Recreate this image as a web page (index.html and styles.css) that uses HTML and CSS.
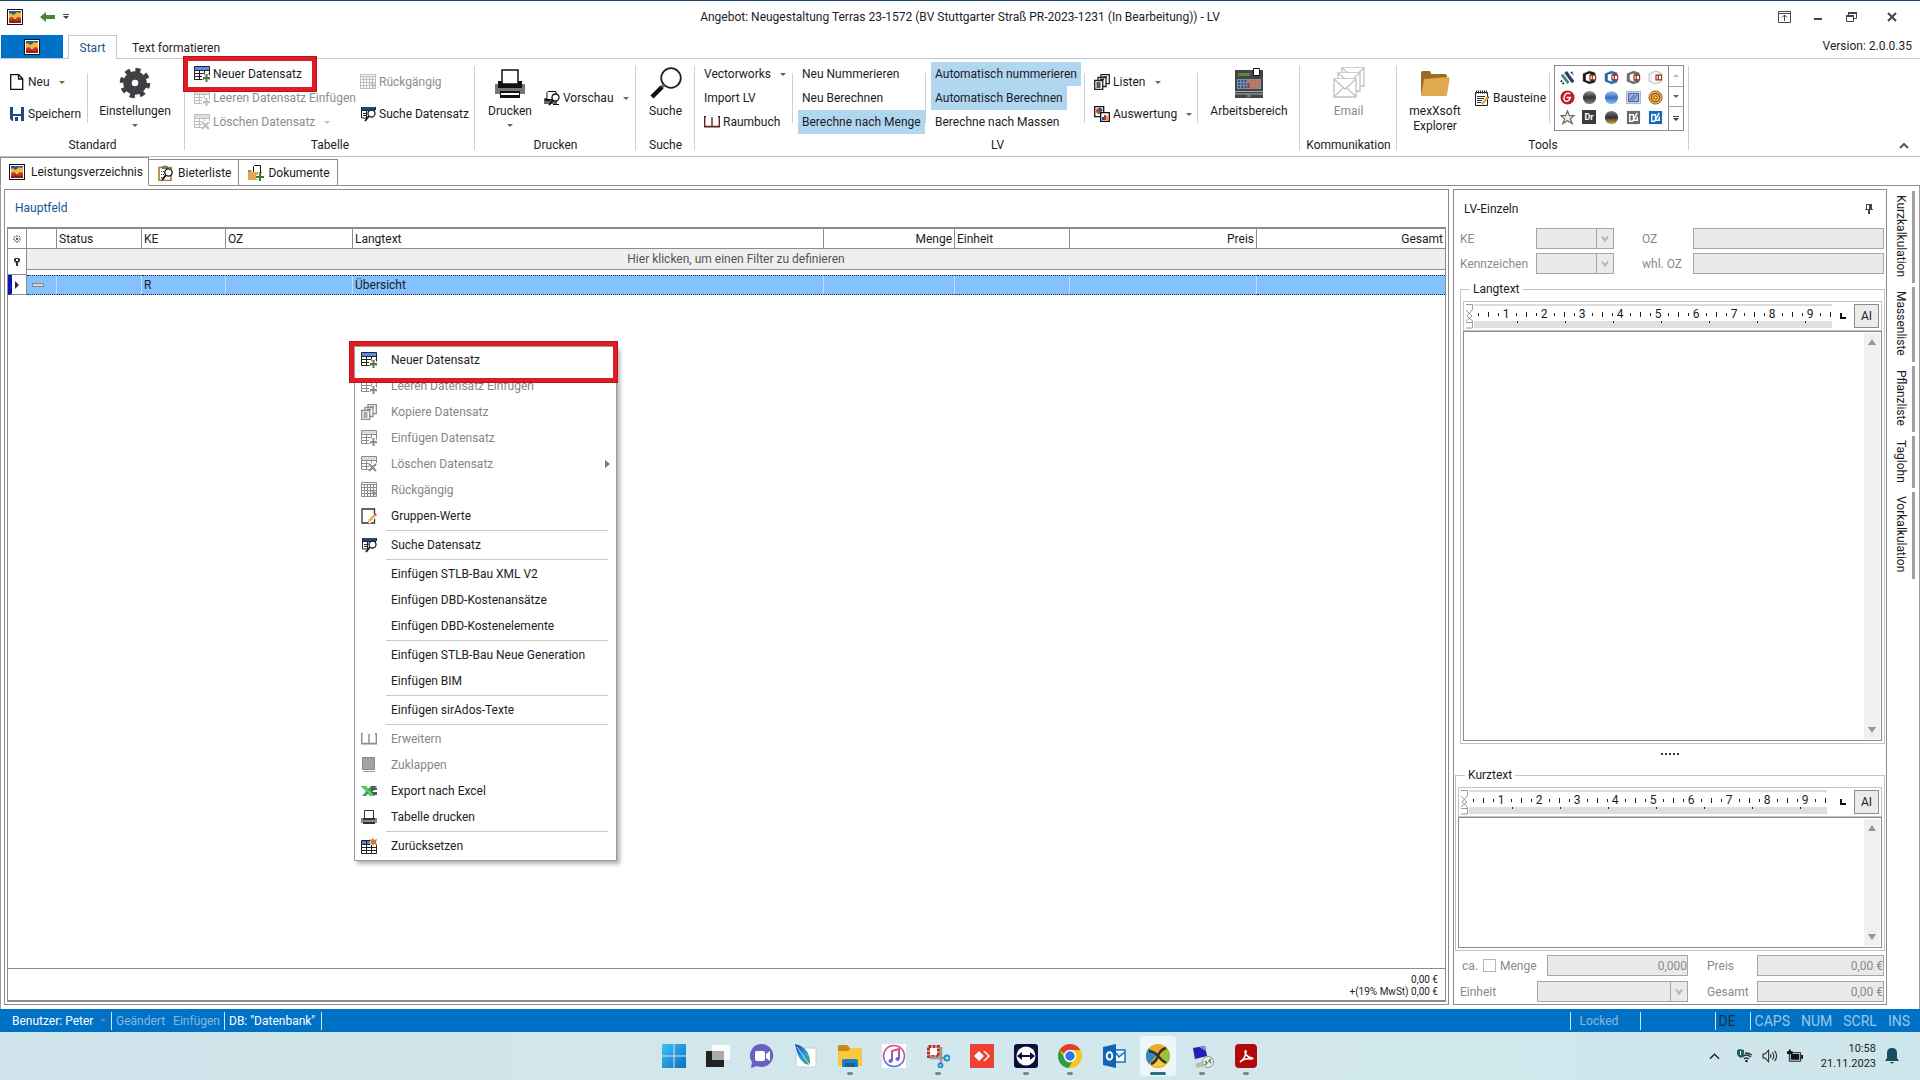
FILE: index.html
```html
<!DOCTYPE html>
<html lang="de">
<head>
	<meta charset="UTF-8">
	<meta name="viewport" content="width=device-width, initial-scale=1">

	<title>LV</title>

	<link rel="stylesheet" href="styles.css">
</head>
<body>

<!-- icon sprite -->
<svg class="sprite" aria-hidden="true">
	<defs>
		<linearGradient id="g-dark" x2="0" y2="1"><stop offset="0" stop-color="#999"/><stop offset=".5" stop-color="#333"/><stop offset="1" stop-color="#888"/></linearGradient>
		<linearGradient id="g-blue" x2="0" y2="1"><stop offset="0" stop-color="#a8c8ee"/><stop offset=".5" stop-color="#3a70be"/><stop offset="1" stop-color="#8bc0ff"/></linearGradient>
		<linearGradient id="g-gold" x2="0" y2="1"><stop offset="0" stop-color="#777"/><stop offset=".5" stop-color="#333"/><stop offset="1" stop-color="#d9a83c"/></linearGradient>
		<linearGradient id="g-win" x2="1" y2="1"><stop offset="0" stop-color="#3fc1f2"/><stop offset="1" stop-color="#0b6fc4"/></linearGradient>
		<linearGradient id="g-music" x2="0" y2="1"><stop offset="0" stop-color="#ec4a7c"/><stop offset="1" stop-color="#4a6fe0"/></linearGradient>
		<linearGradient id="g-feather" x2="1" y2="1"><stop offset="0" stop-color="#1c3fa0"/><stop offset=".6" stop-color="#26a5dc"/><stop offset="1" stop-color="#4a9a3c"/></linearGradient>
	</defs>
	<symbol id="app" viewBox="0 0 16 16">
		<path fill="#111" d="M0 0h16v16H0z"/><path fill="#fff" d="M1 1h14v14H1z"/>
		<path fill="#2d5590" d="M2 2h12v6H2z"/><path fill="#f3b93c" d="M2 5l2-1 2 2 2-1 2-2 2 1 2-1v6H2z"/>
		<path fill="#c63a22" d="M2 9l3-1 3 2 3-2 3 1v5H2z"/><path fill="#8e2317" d="M2 12l4-1 4 1 4-1v3H2z"/>
	</symbol>
	<symbol id="tbl" viewBox="0 0 16 16">
		<path class="head" d="M1 1h14v3H1z"/>
		<path fill="none" stroke="currentColor" d="M.5 .5h15v13H.5zM0 4.500h16M0 7.500h16M0 10.500h16M5.500 4v10M10.500 4v10"/>
	</symbol>
	<symbol id="tbl-new" viewBox="0 0 16 16">
		<use href="#tbl"/><path fill="#fff" d="M10.500 7h4v9h-4zM8 9.500h8v4H8z"/><path class="plus" d="M11.500 8h2v3h2.500v2h-2.500v3h-2v-3H9v-2h2.500z"/>
	</symbol>
	<symbol id="tbl-del" viewBox="0 0 16 16">
		<use href="#tbl"/><path fill="#fff" d="M8 7h8v9H8z"/><path fill="none" stroke="currentColor" stroke-width="2" d="M8 8l7 7M15 8l-7 7"/>
	</symbol>
	<symbol id="tbl-undo" viewBox="0 0 16 16">
		<path fill="none" stroke="currentColor" d="M.5 .5h15v14H.5zM0 2.500h16M0 5.500h16M0 8.500h16M0 11.500h16M3.500 3v11M6.500 3v11M9.500 3v11M12.500 3v11"/><path fill="currentColor" d="M10 9l5 1-1 4z"/>
	</symbol>
	<symbol id="tbl-find" viewBox="0 0 16 16">
		<path fill="#24477a" d="M1 1h14v3H1z"/><path fill="none" stroke="currentColor" d="M1.500 1v11H7M15.500 1v3M1 4.500h14M3 7.500h4M3 9.500h4M6.500 4v8"/>
		<circle cx="11.500" cy="7.500" r="3.500" fill="#fff" stroke="currentColor" stroke-width="1.300"/><path stroke="currentColor" stroke-width="2" d="M9 10l-4 5"/>
	</symbol>
	<symbol id="tbl-reset" viewBox="0 0 16 16">
		<path fill="#4f87d8" d="M1 3h9v3H1z"/><path fill="none" stroke="currentColor" d="M.5 2.500h15v13H.5zM0 6.500h16M0 9.500h16M0 12.500h16M5.500 3v12M10.500 3v12"/>
		<path fill="#fff" d="M9 1h7v6H9z"/><path fill="#d07a28" d="M12 0l1 2 3-1-1 3 1 3-3-1-1 2-1-2-2 1 1-3-2-3 2 1z"/>
	</symbol>
	<symbol id="copy" viewBox="0 0 16 16">
		<g fill="#fff" stroke="currentColor" stroke-width="1.300"><path d="M7 .7h8.300v9H7z"/><path d="M4 3.500h8v9H4z"/><path d="M.7 6.500h8v9h-8z"/><path d="M9 3h4M2.500 9h4M2.500 11h4M2.500 13h4M6 5.500h4"/></g>
	</symbol>
	<symbol id="page" viewBox="0 0 16 16"><path fill="#fff" stroke="#111" stroke-width="1.300" d="M1.700.7h8l4 4v10.600h-12zM9.500 1v4h4"/></symbol>
	<symbol id="save" viewBox="0 0 16 16"><path fill="#1d4a80" d="M1 1h14v14H3l-2-2z"/><path fill="#fff" d="M4 1h8v7H4zM4 10h8v5H4z"/><path fill="#1d4a80" d="M6 11h3v4H6z"/></symbol>
	<symbol id="edit" viewBox="0 0 16 16"><path fill="#fff" stroke="#333" stroke-width="1.300" d="M1 1h12.500v14H1z"/><path stroke="#fff" stroke-width="5" d="M7 14l7-7"/><path stroke="#eab155" stroke-width="2.600" d="M8 13l6-6"/><path stroke="#b04a3c" stroke-width="2.600" d="M14 7l1-1"/><path stroke="#555" d="M6 15l1.500-1.500"/></symbol>
	<symbol id="book" viewBox="0 0 16 12"><path fill="none" stroke="currentColor" stroke-width="1.400" d="M2 .7H.7v10h14.600v-10H14M8 1v9M.7 10.500h14.600"/></symbol>
	<symbol id="closed" viewBox="0 0 16 16"><path fill="#a3a3a3" stroke="#888" d="M1.500.5h12v12h-12z"/><path stroke="#999" d="M2 14.500h12"/></symbol>
	<symbol id="excel" viewBox="0 0 16 12"><path fill="#555" d="M10 1h6l-2 2h3v2h-4l-2 2h5v3h-6z"/><path fill="#2fae47" d="M0 1h5l9 10H9z"/><path fill="#2b6e3c" d="M14 1h-4L1 11h4z" opacity=".75"/><path fill="#53dc65" d="M1.500 1.500h3l8 9h-3z"/></symbol>
	<symbol id="printer" viewBox="0 0 32 32"><path fill="#77777b" d="M1 17h30v10H1z"/><path fill="#111" d="M4 14h24v7H4z"/><path fill="#fff" stroke="#111" stroke-width="1.500" d="M8 3h16v14H8z"/><path fill="#111" d="M4 17h24v4H4zM6 24h20v7H6z"/><path fill="#fff" d="M7 26h18v2H7z"/></symbol>
	<symbol id="print-small" viewBox="0 0 16 16"><path fill="#8a8a8e" d="M0 9h16v5H0z"/><path fill="#fff" stroke="#333" d="M3.500 1.500h9v8h-9z"/><path fill="#333" d="M2 9h12v2H2zM2 13h12v2H2z"/></symbol>
	<symbol id="preview" viewBox="0 0 16 16"><path fill="#666" d="M0 8h13v6H0z"/><path fill="#fff" stroke="#111" d="M4 1.500l-1 1v7h9v-8z"/><path fill="#111" d="M1 9h5v2H1z"/><circle cx="11.500" cy="7.500" r="3.500" fill="#fff" stroke="#111" stroke-width="1.300"/><path stroke="#111" stroke-width="2" d="M9 10l-4 5"/><path stroke="#111" d="M9 14.500h6"/></symbol>
	<symbol id="lens" viewBox="0 0 32 32"><circle cx="21" cy="11" r="9.800" fill="none" stroke="#222" stroke-width="1.800"/><path stroke="#666" stroke-width="3" d="M14 18l-3 3"/><path stroke="#111" stroke-width="4.500" d="M12 20L2 30"/></symbol>
	<symbol id="gear" viewBox="0 0 32 32"><circle cx="16" cy="16" r="7.500" fill="none" stroke="#3f3f44" stroke-width="8.500"/><circle cx="16" cy="16" r="13" fill="none" stroke="#3f3f44" stroke-width="4.500" stroke-dasharray="5.105"/></symbol>
	<symbol id="chart" viewBox="0 0 16 16"><path fill="#fff" stroke="#111" stroke-width="1.300" d="M.7.7h9v10h-9z"/><circle cx="5" cy="5" r="3" fill="#b5502d"/><path fill="#2a4ca0" d="M5 5V1.500A3.500 3.500 0 0 1 8.500 5z"/><path fill="#fff" stroke="#111" stroke-width="1.300" d="M6.700 6.700h8.600v8.600H6.700z"/><path fill="#2a4ca0" d="M8 11h2v3H8z"/><path fill="#b5302d" d="M10 9h2v5h-2z"/><path fill="#e0a030" d="M12 10h2v4h-2z"/></symbol>
	<symbol id="calc" viewBox="0 0 32 32"><path fill="#434549" d="M2 3h28v21H2zM2 25h28v6H2z"/><path fill="#8c8e91" d="M4 12h24v10H4z"/><path fill="#5b8a3c" d="M5 6h12v3H5z"/><path fill="#fff" stroke="#111" d="M20.500 1.500h6v7h-6z"/><path stroke="#2456a8" stroke-width="2" stroke-dasharray="2 1.300" d="M5 14h9M5 17h9M5 20h9"/><path stroke="#e0622a" stroke-width="2" stroke-dasharray="2 1.300" d="M18 14h9M18 17h9M18 20h9"/><path stroke="#c22" stroke-width="2" d="M15.500 16v5"/><path stroke="#aaa" d="M2 24.500h28M2 27h28M14 29h4"/></symbol>
	<symbol id="mail" viewBox="0 0 32 32"><g fill="#fff" stroke="#c2c2c4" stroke-width="1.300"><path d="M9 1h22v18H9z"/><path d="M9 1l11 9 11-9"/><path d="M5 6h22v18H5z"/><path d="M5 6l11 9 11-9"/><path d="M1 12h22v18H1z"/><path d="M1 30l9-9M23 30l-9-9"/><path d="M1 12l11 10 11-10"/></g></symbol>
	<symbol id="folder" viewBox="0 0 32 32"><path fill="#9c6c24" d="M2 28V6q0-2 2-2h6q2 0 2 3h14q2 0 2 2v4H8z"/><path fill="#e0a950" d="M5 12l24-2q2 0 1.500 2L28 28q0 1-2 1H2z"/></symbol>
	<symbol id="notes" viewBox="0 0 16 16"><path fill="#fff" stroke="#222" d="M1.500 2.500h12v13h-12z"/><path stroke="#222" stroke-width="3" stroke-dasharray="1 1" d="M2 2h12"/><path stroke="#333" d="M3 6.500h8M3 8.500h7M3 10.500h5M3 12.500h4"/><path stroke="#e3a63c" stroke-width="2.500" d="M8 14l6-7"/><path stroke="#b33" stroke-width="2.500" d="M13.500 7.500l1-1"/></symbol>
	<symbol id="clip" viewBox="0 0 16 16"><path fill="#fff" stroke="#a87a35" stroke-width="1.600" d="M1 2.500h12v13H1z"/><path fill="#777" d="M4 1h2l1-1 1 1h2v3H4z"/><path stroke="#333" stroke-dasharray="1 1" d="M3 6.500h4M3 9.500h3M3 12.500h3"/><circle cx="10.500" cy="7.500" r="3.700" fill="#fff" stroke="#111" stroke-width="1.300"/><path stroke="#111" stroke-width="2" d="M8 10l-4 5"/></symbol>
	<symbol id="docs" viewBox="0 0 16 16"><path fill="#b98233" d="M0 5h3l1 2h10v7H0z"/><path fill="#fff" stroke="#111" d="M6.500.5h6v8h-7v-7z"/><path fill="#e0a950" d="M0 7h12l-1 8H0z"/><path fill="#fff" d="M10 8h4v8h-4zM8 10h8v4H8z"/><path fill="#3c7a35" d="M11 8h2v3h3v2h-3v3h-2v-3H8v-2h3z"/></symbol>
	<symbol id="cube" viewBox="0 0 16 16"><path fill="currentColor" stroke="#888" stroke-width=".5" d="M1 4l7-3 6 2v10l-6 2-7-3z"/><path fill="#fff" d="M4 5l5-1.500v9L4 11z"/><path fill="#fff" stroke="#9a3420" stroke-width="1.300" d="M8.500 5.500h6v5h-6zM11 5.500v5"/></symbol>
	<symbol id="stripes" viewBox="0 0 16 16"><path stroke="#2b3c6e" stroke-width="3.500" d="M6 2l8 11"/><path stroke="#3a9070" stroke-width="3" d="M2 5l7 9"/><path stroke="#2b3c6e" stroke-width="2" d="M12 2l2 3M1 11l3 4" stroke-dasharray="2 1"/></symbol>
	<symbol id="seal" viewBox="0 0 16 16"><circle cx="8" cy="8" r="7.500" fill="#c41a22"/><path fill="none" stroke="#fff" stroke-width="1.500" d="M11 4q-4-2-6 2t1 6q3 1 5-4H7"/></symbol>
	<symbol id="stamp" viewBox="0 0 16 16"><path fill="#e8eef8" stroke="#aab" d="M.5 1.500h15v13H.5z"/><path fill="#8fb0e4" stroke="#2c4f96" d="M2.500 3.500h11v9h-11z"/><path stroke="#35589c" d="M4 11l5-6M7 11l5-6"/></symbol>
	<symbol id="coil" viewBox="0 0 16 16"><circle cx="8" cy="8" r="7" fill="#eeb95c" stroke="#8f5512"/><circle cx="8" cy="8" r="4.500" fill="none" stroke="#8f5512" stroke-width="1.300"/><circle cx="8" cy="8" r="2" fill="none" stroke="#8f5512"/></symbol>
	<symbol id="star" viewBox="0 0 16 16"><path fill="#f4ecd0" stroke="#666" stroke-width="1.300" d="M8 1l2 5h5l-4 3.500 2 5L8 11.500l-5 3 2-5L1 6h5z"/></symbol>
	<symbol id="vee" viewBox="0 0 16 16"><path fill="currentColor" d="M1 1h14v14H1z"/><path fill="none" stroke="#fff" stroke-width="1.500" d="M4 4v8h3l5-9M5 5h3v6h4V7"/></symbol>
	<symbol id="pin" viewBox="0 0 10 10"><path fill="#444" d="M2 0h6v5h1v1H6v4H4V6H1V5h1z"/><path fill="#fff" d="M3 1h2v4H3z"/></symbol>
</svg>

<div class="app">
	<header class="titlebar">
		<div class="quick">
			<svg class="i16"><use href="#app"/></svg>
			<button type="button" aria-label="Zurück"><svg class="back" viewBox="0 0 15 10"><path fill="#4f8136" d="M0 5l6-5v3h9v4H6v3z"/></svg></button>
			<button type="button" aria-label="Anpassen"><svg class="more" viewBox="0 0 6 6"><path fill="#444" d="M0 0h6v1H0zM0 2h6L3 5z"/></svg></button>
		</div>
		<div class="caption">Angebot: Neugestaltung Terras 23-1572 (BV Stuttgarter Straß PR-2023-1231 (In Bearbeitung)) - LV</div>
		<div class="winctl">
			<button type="button" aria-label="Menüband"><svg viewBox="0 0 14 14"><path fill="none" stroke="#444" d="M.5 1.500h12v11H.5zM1 3.500h12M6.500 11V5M4 7.500L6.500 5 9 7.500"/></svg></button>
			<button type="button" aria-label="Minimieren"><svg viewBox="0 0 14 14"><path fill="#444" d="M3 8h8v2H3z"/></svg></button>
			<button type="button" aria-label="Wiederherstellen"><svg viewBox="0 0 14 14"><path fill="none" stroke="#444" d="M4.500 5V2.500h8v6H10M2.500 5.500h7v6h-7z"/><path stroke="#444" stroke-width="2" d="M4 3h9M2 6h8"/></svg></button>
			<button type="button" aria-label="Schließen"><svg viewBox="0 0 14 14"><path stroke="#444" stroke-width="2" d="M3 3l8 8M11 3l-8 8"/></svg></button>
		</div>
	</header>

	<nav class="tabs">
		<button type="button" class="file" aria-label="Datei"><svg class="i16"><use href="#app"/></svg></button>
		<button type="button" class="tab active">Start</button>
		<button type="button" class="tab">Text formatieren</button>
		<span class="version">Version: 2.0.0.35</span>
	</nav>

	<div class="ribbon">
		<section class="group">
			<div class="cmds cmds-standard">
				<div class="col sep">
					<button type="button"><svg class="i16"><use href="#page"/></svg>Neu<i class="arr"></i></button>
					<button type="button"><svg class="i16"><use href="#save"/></svg>Speichern</button>
				</div>
				<button type="button" class="big"><svg><use href="#gear"/></svg>Einstellungen<i class="arr"></i></button>
			</div>
			<h2>Standard</h2>
		</section>
		<section class="group">
			<div class="cmds cmds-table">
				<div class="col">
					<button type="button" class="marked"><svg class="i16 color"><use href="#tbl-new"/></svg>Neuer Datensatz</button>
					<button type="button" disabled><svg class="i16"><use href="#tbl-new"/></svg>Leeren Datensatz Einfügen</button>
					<button type="button" disabled><svg class="i16"><use href="#tbl-del"/></svg>Löschen Datensatz<i class="arr"></i></button>
				</div>
				<div class="col">
					<button type="button" disabled><svg class="i16"><use href="#tbl-undo"/></svg>Rückgängig</button>
					<button type="button"><svg class="i16"><use href="#tbl-find"/></svg>Suche Datensatz</button>
				</div>
			</div>
			<h2>Tabelle</h2>
		</section>
		<section class="group">
			<div class="cmds cmds-print">
				<button type="button" class="big"><svg><use href="#printer"/></svg>Drucken<i class="arr"></i></button>
				<div class="col">
					<button type="button"><svg class="i16"><use href="#preview"/></svg>Vorschau<i class="arr"></i></button>
				</div>
			</div>
			<h2>Drucken</h2>
		</section>
		<section class="group">
			<div class="cmds cmds-search">
				<button type="button" class="big"><svg><use href="#lens"/></svg>Suche</button>
			</div>
			<h2>Suche</h2>
		</section>
		<section class="group">
			<div class="cmds cmds-lv">
				<div class="col sep">
					<button type="button">Vectorworks<i class="arr"></i></button>
					<button type="button">Import LV</button>
					<button type="button"><svg class="i16 red"><use href="#book"/></svg>Raumbuch</button>
				</div>
				<div class="col sep">
					<button type="button">Neu Nummerieren</button>
					<button type="button">Neu Berechnen</button>
					<button type="button" class="on">Berechne nach Menge</button>
				</div>
				<div class="col sep">
					<button type="button" class="on">Automatisch nummerieren</button>
					<button type="button" class="on">Automatisch Berechnen</button>
					<button type="button">Berechne nach Massen</button>
				</div>
				<div class="col sep">
					<button type="button"><svg class="i16"><use href="#copy"/></svg>Listen<i class="arr"></i></button>
					<button type="button"><svg class="i16"><use href="#chart"/></svg>Auswertung<i class="arr"></i></button>
				</div>
				<button type="button" class="big"><svg><use href="#calc"/></svg>Arbeitsbereich</button>
			</div>
			<h2>LV</h2>
		</section>
		<section class="group">
			<div class="cmds cmds-mail">
				<button type="button" class="big" disabled><svg><use href="#mail"/></svg>Email</button>
			</div>
			<h2>Kommunikation</h2>
		</section>
		<section class="group">
			<div class="cmds cmds-tools">
				<button type="button" class="big"><svg><use href="#folder"/></svg>mexXsoft Explorer</button>
				<div class="col sep">
					<button type="button"><svg class="i16"><use href="#notes"/></svg>Bausteine</button>
				</div>
				<div class="gallery">
					<div class="cells">
						<svg><use href="#stripes"/></svg>
						<svg class="c-black"><use href="#cube"/></svg>
						<svg class="c-blue"><use href="#cube"/></svg>
						<svg class="c-gray"><use href="#cube"/></svg>
						<svg class="c-white"><use href="#cube"/></svg>
						<svg><use href="#seal"/></svg>
						<svg viewBox="0 0 16 16"><circle cx="8" cy="8" r="7" fill="url(#g-dark)"/></svg>
						<svg viewBox="0 0 16 16"><circle cx="8" cy="8" r="7" fill="url(#g-blue)"/></svg>
						<svg><use href="#stamp"/></svg>
						<svg><use href="#coil"/></svg>
						<svg><use href="#star"/></svg>
						<span class="dr">Dr</span>
						<svg viewBox="0 0 16 16"><circle cx="8" cy="8" r="7" fill="url(#g-gold)"/></svg>
						<svg class="c-gray"><use href="#vee"/></svg>
						<svg class="c-blue"><use href="#vee"/></svg>
					</div>
					<div class="scroller">
						<button type="button" aria-label="Hoch"><i class="arr up"></i></button>
						<button type="button" aria-label="Runter"><i class="arr"></i></button>
						<button type="button" aria-label="Alle"><svg class="more" viewBox="0 0 6 6"><path fill="#444" d="M0 0h6v1H0zM0 2h6L3 5z"/></svg></button>
					</div>
				</div>
			</div>
			<h2>Tools</h2>
		</section>
		<button type="button" class="collapse" aria-label="Menüband reduzieren"><svg viewBox="0 0 10 6"><path fill="none" stroke="#555" stroke-width="2" d="M1 5l4-4 4 4"/></svg></button>
	</div>

	<nav class="doctabs">
		<button type="button" class="active"><svg class="i16"><use href="#app"/></svg>Leistungsverzeichnis</button>
		<button type="button"><svg class="i16"><use href="#clip"/></svg>Bieterliste</button>
		<button type="button"><svg class="i16"><use href="#docs"/></svg>Dokumente</button>
		<span class="rest"></span>
	</nav>

	<main class="work">
		<section class="main">
			<h1>Hauptfeld</h1>
			<div class="grid">
				<table>
					<colgroup><col class="w-ind"><col class="w-exp"><col class="w-status"><col class="w-ke"><col class="w-oz"><col><col class="w-menge"><col class="w-einheit"><col class="w-preis"><col class="w-gesamt"></colgroup>
					<thead>
						<tr><th class="ind"><svg class="spark" viewBox="0 0 8 8"><path stroke="#444" d="M4 0v8M0 4h8M1 1l6 6M7 1L1 7" stroke-dasharray="2 1"/></svg></th><th></th><th>Status</th><th>KE</th><th>OZ</th><th>Langtext</th><th class="num">Menge</th><th>Einheit</th><th class="num">Preis</th><th class="num">Gesamt</th></tr>
					</thead>
					<tbody>
						<tr class="filter"><td class="ind"><svg viewBox="0 0 6 8"><path fill="#333" d="M0 1l1-1h4l1 1v2L4 5v3H2V5L0 3z"/><path fill="#fff" d="M2 1h2v2H2z"/></svg></td><td colspan="9"><div>Hier klicken, um einen Filter zu definieren</div></td></tr>
						<tr class="row"><td class="ind cur"><i></i></td><td><span class="dash"></span></td><td></td><td>R</td><td></td><td>Übersicht</td><td></td><td></td><td></td><td></td></tr>
					</tbody>
				</table>
				<footer><span>0,00 €</span><span>+(19% MwSt) 0,00 €</span></footer>
			</div>

			<div class="menu">
				<button type="button" class="marked"><svg class="i16 color"><use href="#tbl-new"/></svg>Neuer Datensatz</button>
				<button type="button" disabled><svg class="i16"><use href="#tbl-new"/></svg>Leeren Datensatz Einfügen</button>
				<button type="button" disabled><svg class="i16"><use href="#copy"/></svg>Kopiere Datensatz</button>
				<button type="button" disabled><svg class="i16"><use href="#tbl-new"/></svg>Einfügen Datensatz</button>
				<button type="button" disabled><svg class="i16"><use href="#tbl-del"/></svg>Löschen Datensatz<i class="sub"></i></button>
				<button type="button" disabled><svg class="i16"><use href="#tbl-undo"/></svg>Rückgängig</button>
				<button type="button"><svg class="i16"><use href="#edit"/></svg>Gruppen-Werte</button>
				<hr>
				<button type="button"><svg class="i16"><use href="#tbl-find"/></svg>Suche Datensatz</button>
				<hr>
				<button type="button"><svg class="i16"></svg>Einfügen STLB-Bau XML V2</button>
				<button type="button"><svg class="i16"></svg>Einfügen DBD-Kostenansätze</button>
				<button type="button"><svg class="i16"></svg>Einfügen DBD-Kostenelemente</button>
				<hr>
				<button type="button"><svg class="i16"></svg>Einfügen STLB-Bau Neue Generation</button>
				<button type="button"><svg class="i16"></svg>Einfügen BIM</button>
				<hr>
				<button type="button"><svg class="i16"></svg>Einfügen sirAdos-Texte</button>
				<hr>
				<button type="button" disabled><svg class="i16"><use href="#book"/></svg>Erweitern</button>
				<button type="button" disabled><svg class="i16"><use href="#closed"/></svg>Zuklappen</button>
				<button type="button"><svg class="i16"><use href="#excel"/></svg>Export nach Excel</button>
				<button type="button"><svg class="i16"><use href="#print-small"/></svg>Tabelle drucken</button>
				<hr>
				<button type="button"><svg class="i16"><use href="#tbl-reset"/></svg>Zurücksetzen</button>
			</div>
		</section>

		<aside class="detail">
			<header><h2>LV-Einzeln</h2><svg><use href="#pin"/></svg></header>
			<div class="fields top">
				<label for="ke">KE</label>
				<span class="combo"><select id="ke" disabled></select><svg viewBox="0 0 8 6"><path d="M1 1l3 4 3-4"/></svg></span>
				<label for="oz">OZ</label>
				<input id="oz" type="text" disabled>
				<label for="kz">Kennzeichen</label>
				<span class="combo"><select id="kz" disabled></select><svg viewBox="0 0 8 6"><path d="M1 1l3 4 3-4"/></svg></span>
				<label for="whl">whl. OZ</label>
				<input id="whl" type="text" disabled>
			</div>

			<fieldset class="long">
				<legend>Langtext</legend>
				<div class="ruler">
					<svg class="indent" viewBox="0 0 8 25"><path fill="#fff" stroke="#999" d="M0 .5h6.500v5L1 12l5.500 5v7H0M0 6l6 6-6 5M0 18.500h6"/></svg>
					<div class="scale"><div class="nums"><span>1</span><span>2</span><span>3</span><span>4</span><span>5</span><span>6</span><span>7</span><span>8</span><span>9</span></div></div>
					<i class="tabstop"></i>
					<button type="button">AI</button>
				</div>
				<div class="edit">
					<textarea aria-label="Langtext"></textarea>
					<div class="vbar"><i class="u"></i><i class="d"></i></div>
				</div>
			</fieldset>

			<div class="splitter"><i></i><i></i><i></i><i></i><i></i></div>

			<fieldset class="short">
				<legend>Kurztext</legend>
				<div class="ruler">
					<svg class="indent" viewBox="0 0 8 25"><path fill="#fff" stroke="#999" d="M0 .5h6.500v5L1 12l5.500 5v7H0M0 6l6 6-6 5M0 18.500h6"/></svg>
					<div class="scale"><div class="nums"><span>1</span><span>2</span><span>3</span><span>4</span><span>5</span><span>6</span><span>7</span><span>8</span><span>9</span></div></div>
					<i class="tabstop"></i>
					<button type="button">AI</button>
				</div>
				<div class="edit">
					<textarea aria-label="Kurztext"></textarea>
					<div class="vbar"><i class="u"></i><i class="d"></i></div>
				</div>
			</fieldset>

			<div class="fields sums">
				<div class="qty">
					<label for="ca">ca.</label><input id="ca" type="checkbox" disabled>
					<label for="menge">Menge</label>
					<input id="menge" type="text" value="0,000" disabled>
				</div>
				<label for="preis">Preis</label>
				<input id="preis" type="text" value="0,00 €" disabled>
				<div class="unit">
					<label for="einheit">Einheit</label>
					<span class="combo"><select id="einheit" disabled></select><svg viewBox="0 0 8 6"><path d="M1 1l3 4 3-4"/></svg></span>
				</div>
				<label for="gesamt">Gesamt</label>
				<input id="gesamt" type="text" value="0,00 €" disabled>
			</div>
		</aside>

		<nav class="side">
			<button type="button">Kurzkalkulation</button>
			<button type="button">Massenliste</button>
			<button type="button">Pflanzliste</button>
			<button type="button">Taglohn</button>
			<button type="button">Vorkalkulation</button>
		</nav>
	</main>

	<footer class="status">
		<span class="user">Benutzer: Peter<i class="arr"></i></span>
		<span class="dim">Geändert</span>
		<span class="dim cut">Einfügen</span>
		<span class="db">DB: "Datenbank"</span>
		<span class="fill"></span>
		<span class="dim locked">Locked</span>
		<span class="blank"></span>
		<span class="lang">DE</span>
		<span class="keys"><span>CAPS</span><span>NUM</span><span>SCRL</span><span>INS</span></span>
	</footer>
</div>

<footer class="taskbar">
	<div class="dock">
		<a href="#"><svg viewBox="0 0 24 24"><path fill="url(#g-win)" d="M0 0h11.500v11.500H0zM12.500 0H24v11.500H12.500zM0 12.500h11.500V24H0zM12.500 12.500H24V24H12.500z"/></svg></a>
		<a href="#"><svg viewBox="0 0 24 24"><path fill="#222" d="M0 7h18v16H0z"/><path fill="#fff" d="M6 1h18v15H6z" opacity=".9"/><path fill="#aaa" d="M6 7h12v9H6z"/></svg></a>
		<a href="#"><svg viewBox="0 0 24 24"><path fill="#6c5fc0" d="M12 0a11.500 11.500 0 1 1-5 22L1 24l1-6A11.500 11.500 0 0 1 12 0z"/><rect x="5" y="7" width="10" height="10" rx="2" fill="#fff"/><path fill="#fff" d="M16 10l4-3v10l-4-3z"/></svg></a>
		<a href="#"><svg viewBox="0 0 24 24"><path fill="#fff" stroke="#ccc" d="M5 4h17v19H2V12z"/><path fill="url(#g-feather)" d="M1 0q11 2 14 12 2 6 0 9-6-1-10-8Q2 6 1 0z"/><path stroke="#fff" stroke-width=".7" fill="none" d="M3 3l14 20"/></svg></a>
		<a href="#" class="run"><svg viewBox="0 0 24 24"><path fill="#c88c14" d="M0 2q0-1 1-1h8l3 3v4H0z"/><path fill="#fbc93d" d="M0 7h10l3-3h10q1 0 1 1v17H0z"/><path fill="#1f7fc4" d="M4 17q0-2 2-2h12q2 0 2 2v6H4z"/><path fill="#166096" d="M7 19h10v4H7z"/></svg></a>
		<a href="#"><svg viewBox="0 0 24 24"><path fill="#fff" d="M0 0h24v24H0z"/><circle cx="12" cy="12" r="10.500" fill="none" stroke="url(#g-music)" stroke-width="1.500"/><path fill="none" stroke="url(#g-music)" stroke-width="2" d="M10 17V7l7-2v10"/><circle cx="8.500" cy="17" r="2" fill="#7a5fd0"/><circle cx="15.500" cy="15" r="2" fill="#7a5fd0"/></svg></a>
		<a href="#" class="run"><svg viewBox="0 0 24 24"><path fill="#fff" stroke="#b5301c" stroke-width="3" stroke-dasharray="3 1" d="M2.500 2.500h10v10h-10z"/><path fill="none" stroke="#999" stroke-width="2.500" d="M15 3v16M4 14h15"/><circle cx="21" cy="14" r="2.500" fill="none" stroke="#1d8bc8" stroke-width="1.800"/><circle cx="14.500" cy="21.500" r="2" fill="none" stroke="#1d8bc8" stroke-width="1.800"/></svg></a>
		<a href="#"><svg viewBox="0 0 24 24"><path fill="#ee4135" d="M0 0h24v24H0z"/><path fill="#fff" d="M9 7l5 5-5 5-5-5zM13 7h2l5 5-5 5h-2l5-5z"/></svg></a>
		<a href="#" class="run"><svg viewBox="0 0 24 24"><rect width="24" height="24" rx="3" fill="#0a1038"/><circle cx="12" cy="12" r="9.500" fill="#fff"/><path fill="#0a1038" d="M3 12l5-4v3h8V8l5 4-5 4v-3H8v3z"/></svg></a>
		<a href="#" class="run"><svg viewBox="0 0 24 24"><circle cx="12" cy="12" r="12" fill="#f9c51d"/><path fill="#de4032" d="M1.600 6A12 12 0 0 1 22.400 6H12a6 6 0 0 0-5.500 4z"/><path fill="#2a9d48" d="M1.600 6l5.200 9a6 6 0 0 0 7.200 3l-3.500 6A12 12 0 0 1 1.600 6z"/><circle cx="12" cy="12" r="5.500" fill="#2f76e8" stroke="#fff" stroke-width="1.500"/></svg></a>
		<a href="#"><svg viewBox="0 0 24 24"><path fill="#fff" stroke="#1272c2" stroke-width="1.500" d="M12 6h11v12H12zM13 8l4 5 6-5"/><path fill="#0f65b4" d="M1 3l13-3v24L1 21z"/><ellipse cx="7.500" cy="12" rx="2.800" ry="3.700" fill="none" stroke="#fff" stroke-width="2"/></svg></a>
		<a href="#" class="run now"><svg viewBox="0 0 24 24"><circle cx="12" cy="12" r="12" fill="#efa92a"/><path fill="#2d8dc0" d="M3 4l7 8-7 8a12 12 0 0 1 0-16z"/><path fill="#9cc23a" d="M21 4l-7 8 7 8a12 12 0 0 0 0-16z"/><path fill="#f3cf3a" d="M4 20l8-7 8 7a12 12 0 0 1-16 0z"/><path fill="none" stroke="#333" stroke-width="2.500" d="M3 7q6 1 9 5t8 7M20 4q-6 2-8 8t-7 8"/></svg></a>
		<a href="#" class="run"><svg viewBox="0 0 24 24"><path fill="#ddd" d="M1 3l15-3 3 13L4 18z"/><path fill="#1a22b8" d="M3 4l12-2 2 10-12 3z"/><path fill="#7a8fe8" d="M9 3l6-1 1 5z"/><path fill="#bbb" d="M5 20l8-3 2 5-8 2z"/><circle cx="18" cy="18" r="5.500" fill="#e8eee4" stroke="#999"/><path fill="none" stroke="#3c7a35" stroke-width="1.300" d="M15 17l2 2-2 2M21 15l-2 2 2 2"/></svg></a>
		<a href="#" class="run"><svg viewBox="0 0 24 24"><rect x="1" width="22" height="24" rx="4" fill="#b20a0a"/><path fill="none" stroke="#fff" stroke-width="1.600" d="M6 18q5-3 6-10 0-3-1 0 1 5 7 6 2 1-1 1-6-1-10 2z"/></svg></a>
	</div>
	<div class="tray">
		<svg viewBox="0 0 12 7"><path fill="none" stroke="#222" stroke-width="1.500" d="M1 6l5-5 5 5"/></svg>
		<svg viewBox="0 0 16 14"><path fill="none" stroke="#333" stroke-width="1.300" d="M5 8q4-4 9 0M7 10q2-2 5 0M8 4q4 0 7 2"/><circle cx="9.500" cy="12" r="1.300" fill="#222"/><path fill="#176068" d="M0 1l3-1 4 1v4q-1 3-3.500 4Q0 7 0 5z"/><path stroke="#fff" d="M3.500 2v4"/></svg>
		<svg viewBox="0 0 17 14"><path fill="none" stroke="#333" stroke-width="1.200" d="M1 5h2l4-4v12l-4-4H1zM9 5q1 2 0 4M11 3q3 4 0 8M13.500 1.500q4 5.500 0 11"/></svg>
		<svg viewBox="0 0 17 14"><path fill="none" stroke="#111" d="M2.500 3.500h12v9h-12z"/><path fill="#111" d="M4 5h9v6H4zM15 6h2v4h-2zM2 0h2v2h2v3H0V2h2z"/></svg>
		<div class="clock"><time>10:58</time><time>21.11.2023</time></div>
		<svg viewBox="0 0 14 16"><path fill="#17505c" d="M7 0q5 0 5 5v5l2 3H0l2-3V5q0-5 5-5zM5 14h4q-2 3-4 0z"/></svg>
	</div>
</footer>

</body>
</html>
```
FILE: styles.css
```css
* {
	box-sizing: border-box;
	margin: 0;
	padding: 0;
}

body {
	display: flex;
	flex-direction: column;
	height: 100vh;
	overflow: hidden;
	background: #fff;
	color: #1c1c28;
	font: 12px/16px Roboto, "Noto Sans", sans-serif;
}

button, input, select, textarea {
	font: inherit;
	color: inherit;
	background: none;
	border: 0;
	border-radius: 0;
}

button {
	white-space: nowrap;
}

h1, h2 {
	font-size: 12px;
	font-weight: normal;
}

svg {
	display: block;
	flex: none;
}

.sprite {
	position: absolute;
	width: 0;
	height: 0;
}

.i16 {
	width: 16px;
	height: 16px;
	color: #222;
}

.head { fill: var(--head, #ddd); }
.plus { fill: var(--plus, currentColor); }

.color {
	--head: #5b8cf0;
	--plus: #4c7a3c;
}

button:disabled .i16 { color: #8c8c8c; }
.ribbon button:disabled .i16 { color: #bdbdbd; }
.red { color: #5e2222; }

.arr {
	flex: none;
	width: 0;
	height: 0;
	border: 3px solid transparent;
	border-top-color: #666;
	border-bottom: 0;
}

.app {
	flex: 1;
	display: flex;
	flex-direction: column;
	min-height: 0;
	border-top: 1px solid #1f4568;
}

/* title bar */
.titlebar {
	display: grid;
	grid-template-columns: 1fr auto 1fr;
	align-items: center;
	height: 34px;
	padding: 0 7px 2px;
}

.quick {
	display: flex;
	align-items: center;
}

.back { width: 15px; height: 10px; margin-left: 17px; }
.quick .more { margin-left: 8px; }
.more { width: 6px; height: 6px; }

.winctl {
	display: flex;
	justify-content: flex-end;
	gap: 19px;
	padding-right: 14px;
}

.winctl button:last-child { margin-left: 8px; }
.winctl svg { width: 14px; height: 14px; }

.tabs {
	display: flex;
	height: 24px;
	padding-left: 1px;
	border-bottom: 1px solid #c6c6c6;
}

.file {
	display: flex;
	align-items: center;
	justify-content: center;
	width: 62px;
	background: #0072c6;
}

.tab {
	padding: 2px 15px 0;
}

.tab.active {
	width: 49px;
	margin: 0 0 -1px 5px;
	padding: 0;
	color: #19548c;
	background: #fff;
	border: 1px solid #c6c6c6;
	border-bottom: 0;
}

.version {
	margin-left: auto;
	padding: 3px 8px 0 0;
}

/* ribbon */
.ribbon {
	display: flex;
	height: 98px;
	border-bottom: 1px solid #c0c0c0;
}

.group {
	padding-top: 3px;
	background: linear-gradient(#d0d0d0, #d0d0d0) right center / 1px 84px no-repeat;
}

.group h2 {
	line-height: 22px;
	text-align: center;
}

.cmds {
	display: grid;
	height: 72px;
}

.cmds-standard { grid-template-columns: 88px 94px; padding-right: 3px; }
.cmds-table { grid-template-columns: 166px 124px; }
.cmds-print { grid-template-columns: 50px 101px; padding-left: 10px; }
.cmds-search { grid-template-columns: 59px; }
.cmds-lv { grid-template-columns: 98px 133px 159px 113px 102px; }
.cmds-mail { grid-template-columns: 97px; }
.cmds-tools { grid-template-columns: 60px 85px 139px; padding-left: 8px; }

.col {
	display: flex;
	flex-direction: column;
	align-items: flex-start;
	justify-content: center;
	padding-left: 5px;
}

.sep {
	background: linear-gradient(#d0d0d0, #d0d0d0) right center / 1px 50px no-repeat;
}

.col button {
	display: flex;
	align-items: center;
	gap: 3px;
	height: 24px;
	padding: 0 4px;
}

.col button:first-child:nth-last-child(2),
.col button:nth-child(2):last-child {
	height: 32px;
}

.col .arr { margin-left: 6px; }
.col .on { background: #b1d6f0; }

.ribbon button:disabled { color: #8d8d8d; }
.ribbon button:disabled .arr { border-top-color: #c0c0c0; }

.big {
	display: flex;
	flex-direction: column;
	align-items: center;
	padding-top: 5px;
	line-height: 15px;
	white-space: normal;
}

.big svg {
	width: 32px;
	height: 32px;
	margin-bottom: 5px;
}

.big .arr { margin-top: 5px; }

.marked { position: relative; }

.marked::after {
	content: "";
	position: absolute;
	border: 5px solid #e11b22;
	outline: 1px solid #b8141a;
	outline-offset: -1px;
}

.ribbon .marked::after {
	inset: -6px auto -6px -7px;
	width: 124px;
}

.gallery {
	display: flex;
	align-self: center;
	width: 130px;
	height: 66px;
	margin-left: 4px;
	border: 1px solid #8c8c8c;
}

.cells {
	flex: 1;
	display: grid;
	grid-template-columns: repeat(5, 22px);
	grid-auto-rows: 20px;
	padding: 1px;
	align-content: start;
	place-items: center;
}

.cells svg { width: 15px; height: 15px; }
.c-black { color: #111; }
.c-blue { color: #1668b8; }
.c-gray { color: #6a6a6a; }
.c-white { color: #eee; }

.dr {
	width: 14px;
	background: #3c3c3c;
	color: #fff;
	font-size: 9px;
	font-weight: bold;
	line-height: 14px;
	text-align: center;
}

.scroller {
	display: grid;
	width: 15px;
	border-left: 1px solid #8c8c8c;
}

.scroller button {
	display: grid;
	place-items: center;
}

.scroller button + button { border-top: 1px solid #a8a8a8; }
.scroller .up { transform: rotate(180deg); border-top-color: #bbb; }

.collapse {
	align-self: flex-end;
	margin: 0 11px 7px auto;
}

.collapse svg { width: 10px; height: 6px; }

/* document tabs */
.doctabs {
	display: flex;
	align-items: flex-end;
	height: 29px;
}

.doctabs button {
	display: flex;
	align-items: center;
	gap: 4px;
	height: 27px;
	padding: 1px 7px 0 9px;
	border: 1px solid #8c8c8c;
	border-left: 0;
}

.doctabs .active {
	gap: 6px;
	height: 29px;
	padding: 1px 5px 0 8px;
	border-left: 1px solid #8c8c8c;
	border-bottom-color: #fff;
}

.rest {
	flex: 1;
	border-bottom: 1px solid #8c8c8c;
}

/* work area */
.work {
	flex: 1;
	display: flex;
	min-height: 0;
	padding: 3px 1px 4px 3px;
	border: 1px solid #9c9c9c;
	border-top: 0;
	border-bottom: 0;
}

.main {
	position: relative;
	flex: 1;
	display: flex;
	flex-direction: column;
	min-width: 0;
	margin-right: 4px;
	padding: 0 2px 2px;
	border: 1px solid #8c8c8c;
}

.main h1 {
	padding-left: 8px;
	color: #14558f;
	line-height: 37px;
}

.grid {
	flex: 1;
	display: flex;
	flex-direction: column;
	border: 1px solid #8c8c8c;
	border-top-width: 2px;
	border-bottom-width: 2px;
}

table {
	width: 100%;
	table-layout: fixed;
	border-collapse: separate;
	border-spacing: 0;
}

.w-ind { width: 19px; }
.w-exp { width: 30px; }
.w-status { width: 85px; }
.w-ke { width: 84px; }
.w-oz { width: 127px; }
.w-menge { width: 131px; }
.w-einheit { width: 115px; }
.w-preis { width: 187px; }
.w-gesamt { width: 188px; }

th, td {
	height: 20px;
	padding: 0 2px;
	border-right: 1px solid #8c8c8c;
	font-weight: normal;
	line-height: 18px;
	text-align: left;
	white-space: nowrap;
}

th { border-bottom: 1px solid #8c8c8c; }
th.num { text-align: right; }
th:last-child, td:last-child { border-right: 0; }

.ind {
	padding: 0;
	border-bottom: 1px solid #8c8c8c;
	text-align: center;
}

.ind svg { width: 6px; height: 8px; margin: 0 auto; }
.ind .spark { width: 8px; }

.filter td { height: 26px; padding: 0; vertical-align: top; }
.filter .ind { vertical-align: middle; }

.filter div {
	height: 21px;
	border-bottom: 1px solid #8c8c8c;
	background: #efefef;
	color: #555;
	line-height: 20px;
	text-align: center;
}

.row td:not(.ind) {
	background: #84c1ff;
	border-right-color: #c4ddf4;
	border-top: 1px dotted #222;
	border-bottom: 1px dotted #222;
}

.cur { border-left: 4px solid #0b14b8; }

.cur i {
	display: block;
	width: 0;
	margin-left: 3px;
	border: 4px solid transparent;
	border-left-color: #333;
	border-right: 0;
}

.dash {
	display: block;
	width: 12px;
	height: 4px;
	margin-left: 3px;
	border: 1px solid #888;
	background: #ccd4dc;
}

.grid footer {
	display: flex;
	flex-direction: column;
	height: 32px;
	margin-top: auto;
	padding: 5px 7px 0 0;
	border-top: 1px solid #8c8c8c;
	font-size: 10px;
	line-height: 12px;
	text-align: right;
}

/* context menu */
.menu {
	position: absolute;
	top: 156px;
	left: 349px;
	width: 263px;
	padding-bottom: 1px;
	background: #fff;
	border: 1px solid #999;
	box-shadow: 3px 3px 4px rgba(0, 0, 0, .3);
}

.menu button {
	display: flex;
	align-items: center;
	gap: 14px;
	width: 100%;
	height: 26px;
	padding: 0 6px;
}

.menu button:disabled { color: #868686; }

.menu hr {
	height: 1px;
	margin: 1px 8px 1px 31px;
	border: 0;
	background: #cacaca;
}

.menu .marked::after { inset: -6px -2px -10px -6px; }

.sub {
	margin-left: auto;
	border: 4px solid transparent;
	border-left: 5px solid #777;
	border-right: 0;
}

/* detail panel */
.detail {
	display: flex;
	flex-direction: column;
	width: 434px;
	border: 1px solid #8c8c8c;
}

.detail > header {
	display: flex;
	align-items: center;
	justify-content: space-between;
	height: 38px;
	padding: 0 12px 0 10px;
}

.detail > header svg { width: 10px; height: 10px; }

.fields {
	display: grid;
	align-items: center;
	color: #8a8a8a;
	padding: 0 2px 0 6px;
}

.fields.top {
	grid-template-columns: 76px 78px 28px 51px 1fr;
	row-gap: 4px;
}

.top label:nth-of-type(even) { grid-column: 4; }

.fields input[type="text"], .combo {
	width: 100%;
	height: 21px;
	border: 1px solid #a6a6a6;
	background: #eaeaea;
	text-align: right;
}

.combo {
	display: flex;
	align-items: stretch;
}

.combo select {
	flex: 1;
	min-width: 0;
	appearance: none;
	opacity: 1;
}

.combo svg {
	width: 17px;
	height: 19px;
	padding: 0 4px;
	border-left: 1px solid #a6a6a6;
	fill: none;
	stroke: #b5b5b5;
	stroke-width: 2;
}

fieldset {
	display: flex;
	flex-direction: column;
	min-width: 0;
	margin: 7px 1px 0 6px;
	padding: 4px 2px 2px;
	border: 1px solid #c4c4c4;
}

.long { flex: 1; }
.short { flex: none; margin: 6px 1px 0; }
.short .edit { flex: none; height: 131px; }

legend {
	margin-left: 7px;
	padding: 0 3px;
}

.ruler {
	display: flex;
	height: 30px;
	padding: 2px;
	border: 1px solid #c4c4c4;
}

.indent { width: 8px; height: 25px; }

.scale {
	flex: 0 1 358px;
	height: 24px;
	border-top: 2px solid #dcdcdc;
	background: linear-gradient(90deg, transparent 43px, #222 43px 44px, transparent 44px) 0 15px / 48px 2px repeat-x, linear-gradient(#dfdfdf, #dfdfdf) bottom / 100% 7px no-repeat;
}

/* one unit is 38px, the digit sits in the middle of it */
.nums {
	display: flex;
	height: 16px;
	padding-left: 13px;
	line-height: 16px;
	text-align: center;
	background:
		linear-gradient(90deg, transparent 16px, #222 16px 17px, transparent 17px) -12px 7px / 38px 3px repeat-x,
		linear-gradient(90deg, transparent 26px, #222 26px 27px, transparent 27px) -12px 6px / 38px 5px repeat-x,
		linear-gradient(90deg, transparent 36px, #222 36px 37px, transparent 37px) -12px 7px / 38px 3px repeat-x;
}

.nums span { flex: 0 0 38px; }

.tabstop {
	width: 6px;
	height: 6px;
	margin: 9px 8px 0 auto;
	border: 2px solid #111;
	border-width: 0 0 2px 2px;
}

.ruler button {
	width: 25px;
	height: 24px;
	border: 1px solid #8c8c8c;
	background: #ececec;
}

.edit {
	flex: 1;
	display: flex;
	min-height: 0;
	padding: 1px;
	border: 1px solid #8c8c8c;
}

textarea {
	flex: 1;
	resize: none;
}

.vbar {
	display: flex;
	flex-direction: column;
	justify-content: space-between;
	width: 16px;
	padding: 6px 4px;
	background: #f0f0f0;
}

.vbar i { border: 4px solid transparent; }
.vbar .u { border-bottom: 6px solid #959595; border-top: 0; }
.vbar .d { border-top: 6px solid #959595; border-bottom: 0; }

.splitter {
	display: flex;
	justify-content: center;
	gap: 2px;
	padding-top: 9px;
	height: 17px;
}

.splitter i { width: 2px; height: 2px; background: #333; }

.fields.sums {
	grid-template-columns: 228px 19px 50px 1fr;
	row-gap: 5px;
	margin: 4px 0 2px;
}

.sums > label { grid-column: 3; }

.qty, .unit {
	display: flex;
	align-items: center;
}

.qty label:first-child { width: 17px; padding-left: 2px; }
.qty label:nth-of-type(2) { width: 47px; }
.qty #menge { flex: 1; min-width: 0; }
.unit label { width: 77px; }
.unit .combo { flex: 1; }

.qty [type="checkbox"] {
	appearance: none;
	width: 13px;
	height: 13px;
	margin: 0 4px 0 6px;
	border: 1px solid #b5b5b5;
	background: #fff;
}

.side {
	display: flex;
	flex-direction: column;
	align-items: flex-end;
	gap: 4px;
	width: 31px;
	padding: 2px 3px 0 0;
}

.side button {
	padding: 4px 3px 6px 0;
	border-right: 3px solid #a0a0a0;
	writing-mode: vertical-rl;
}

/* status bar */
.status {
	display: flex;
	align-items: center;
	height: 23px;
	background: #0072c6;
	color: #fff;
	white-space: nowrap;
}

.status > span {
	height: 18px;
	border-right: 1px solid #cfe6f7;
	line-height: 18px;
}

.status .arr { border-top-color: #5a8cb8; }

.user {
	display: flex;
	align-items: center;
	justify-content: space-between;
	width: 112px;
	padding: 0 5px 0 12px;
}

.status .dim { padding: 0 4px; color: #86b9e0; }
.status .dim:not(.cut):not(.locked) { border: 0; }
.db { padding: 0 6px 0 4px; }
.fill { flex: 1; }
.status .locked { width: 70px; padding-left: 9px; }
.blank { width: 75px; }
.lang, .keys { font-size: 14px; }
.lang { width: 35px; padding-left: 3px; color: #16304c; }
.status .keys { display: flex; gap: 11px; padding: 0 10px 0 4px; border: 0; color: #9cc6e8; }

/* taskbar */
.taskbar {
	display: grid;
	grid-template-columns: 1fr auto 1fr;
	height: 48px;
	background: linear-gradient(90deg, #cfe4ea, #d3e8ec 50%, #cde6ec);
}

.dock {
	grid-column: 2;
	display: flex;
	gap: 8px;
	align-items: center;
}

.dock a {
	display: flex;
	flex-direction: column;
	align-items: center;
	width: 36px;
	height: 40px;
	padding-top: 8px;
}

.dock svg { width: 24px; height: 24px; }

.dock .run::after {
	content: "";
	width: 6px;
	height: 3px;
	margin-top: 4px;
	border-radius: 2px;
	background: #77858a;
}

.dock .now {
	border-radius: 4px;
	background: #edf6f8;
}

.dock .now::after { width: 16px; background: #1f7480; }

.tray {
	display: flex;
	align-items: center;
	justify-content: flex-end;
	gap: 9px;
	padding-right: 21px;
}

.tray svg { width: 16px; height: 14px; }
.tray svg:first-child { width: 11px; height: 7px; margin-right: 8px; }
.tray svg:last-child { width: 14px; height: 16px; }

.clock {
	display: grid;
	width: 64px;
	color: #222;
	font-size: 11px;
	line-height: 15px;
	text-align: right;
}
```
